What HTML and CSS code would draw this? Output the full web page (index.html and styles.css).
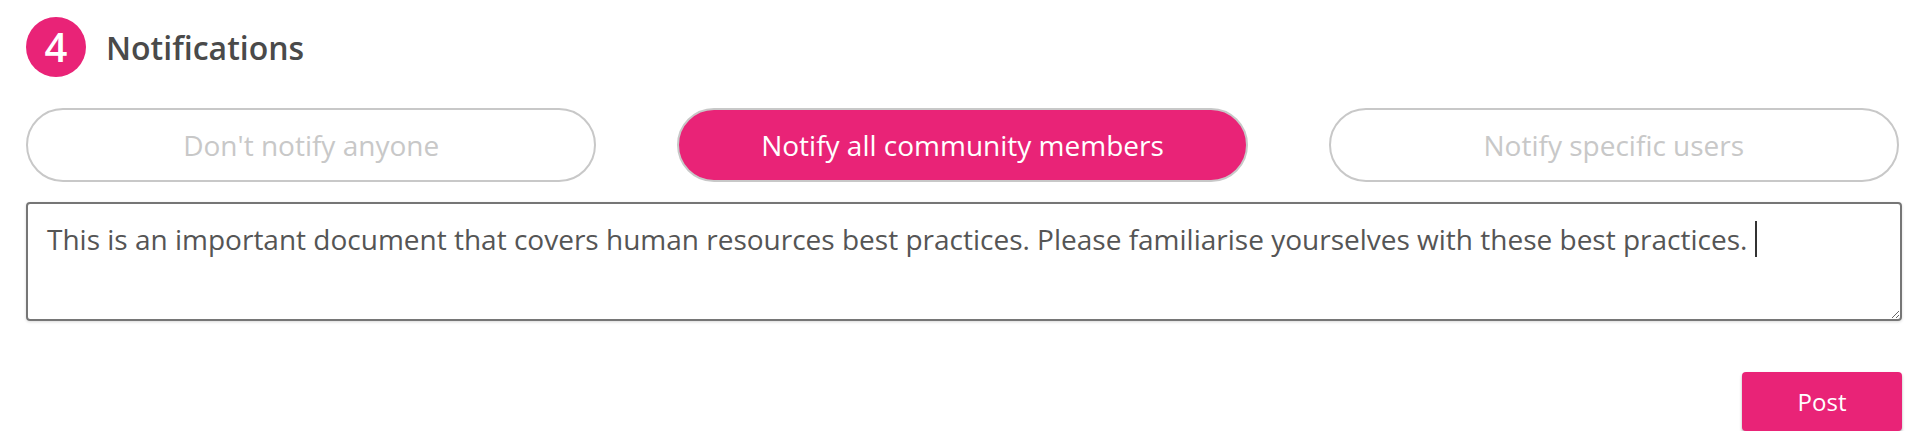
FILE: index.html
```html
<!DOCTYPE html>
<html lang="en">
<head>
    <meta charset="UTF-8">
    <meta name="viewport" content="width=device-width, initial-scale=1.0">
    <title>Notifications</title>
    <link rel="stylesheet" href="styles.css">
</head>
<body>
    <div class="section">
        <div class="section-head">
            <span class="step">4</span>
            <h2>Notifications</h2>
        </div>

        <div class="notify-options">
            <button type="button" class="option">Don't notify anyone</button>
            <button type="button" class="option active">Notify all community members</button>
            <button type="button" class="option">Notify specific users</button>
        </div>

        <div class="message">This is an important document that covers human resources best practices. Please familiarise yourselves with these best practices. <span class="caret"></span></div>

        <div class="actions">
            <button type="button" class="post-btn">Post</button>
        </div>
    </div>
</body>
</html>
```

FILE: styles.css
```css
body {
    font-family: 'Open Sans', 'Noto Sans', sans-serif;
    background: #ffffff;
    color: #4a4a4a;
    margin: 0;
    padding: 0;
}
.section {
    padding: 17px 22px 0 26px;
}
.section-head {
    display: flex;
    align-items: center;
    gap: 20px;
}
.step {
    width: 60px;
    height: 60px;
    border-radius: 50%;
    background-color: #e92377;
    color: #ffffff;
    font-size: 40px;
    font-weight: 600;
    line-height: 60px;
    text-align: center;
}
h2 {
    margin: 0;
    font-size: 32px;
    font-weight: 600;
    color: #4a4a4a;
}
.notify-options {
    display: grid;
    grid-template-columns: repeat(3, 1fr);
    gap: 81px;
    margin-top: 31px;
    padding-right: 3px;
}
.option {
    height: 74px;
    border: 2px solid #c8c8c8;
    border-radius: 37px;
    background-color: #ffffff;
    color: #c8c8c8;
    font-family: inherit;
    font-size: 28px;
    cursor: pointer;
}
.option.active {
    background-color: #e92377;
    color: #ffffff;
}
.message {
    margin-top: 20px;
    height: 119px;
    box-sizing: border-box;
    padding: 17px 19px;
    border: 2px solid #767676;
    border-radius: 4px;
    box-shadow: 0 1px 3px rgba(0, 0, 0, 0.15);
    font-size: 28px;
    line-height: 36px;
    color: #555555;
    overflow: auto;
    resize: vertical;
}
.caret {
    display: inline-block;
    width: 2px;
    height: 36px;
    background-color: #333333;
    vertical-align: top;
}
.actions {
    display: flex;
    justify-content: flex-end;
    margin-top: 51px;
}
.post-btn {
    width: 160px;
    height: 59px;
    border: none;
    border-radius: 4px;
    background-color: #e92377;
    color: #ffffff;
    font-family: inherit;
    font-size: 24px;
    box-shadow: 0 2px 3px rgba(0, 0, 0, 0.3);
    cursor: pointer;
}
```
